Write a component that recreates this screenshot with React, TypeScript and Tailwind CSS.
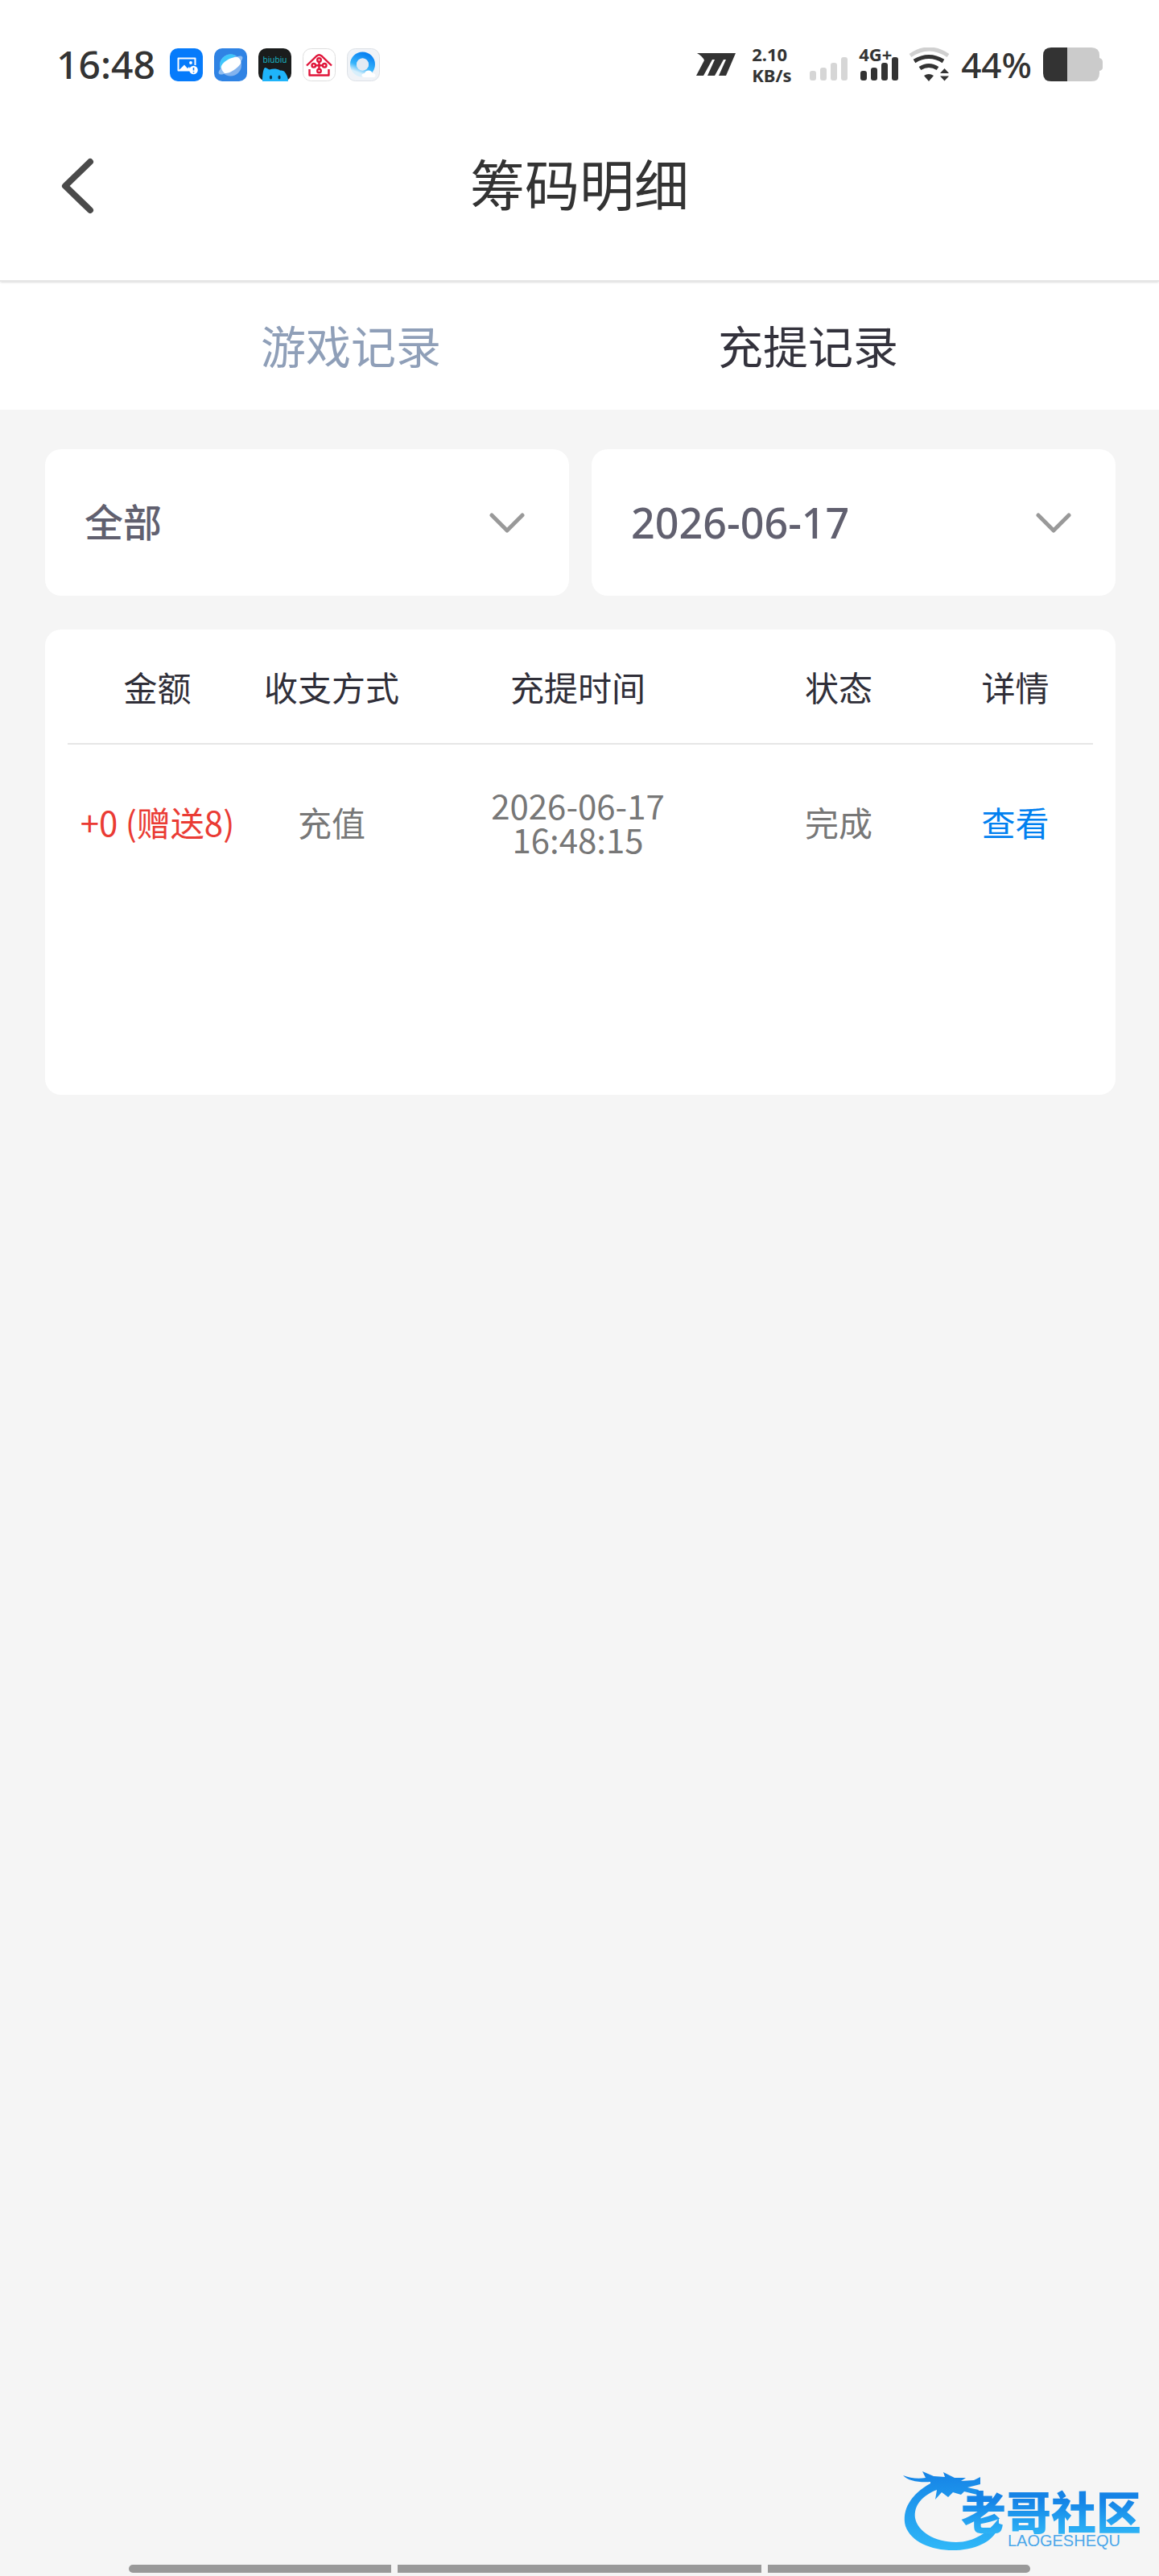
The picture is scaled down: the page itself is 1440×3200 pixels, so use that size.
import { useState } from "react"

const tabs = ["游戏记录", "充提记录"]

const types = ["全部", "充值", "提现"]
const dates = ["2026-06-17", "2026-06-16", "2026-06-15"]

const records = [
    { amount: "+0 (赠送8)", method: "充值", date: "2026-06-17", time: "16:48:15", status: "完成" },
]

function AppIcons() {
    return (
        <div className="flex items-center gap-3.5">
            {/* Gallery */}
            <svg viewBox="0 0 41 41" className="size-[41px]">
                <rect width="41" height="41" rx="10" fill="#067bfb" />
                <path d="M25 27.500H10.500V12.500H31.500V21" fill="none" stroke="#fff" strokeWidth="2" strokeLinejoin="round" />
                <path d="M11 27.500L18 20.500L22 25L24 23L26 27.500Z" fill="#fff" />
                <circle cx="26" cy="18" r="1.900" fill="#fff" />
                <circle cx="29.500" cy="27" r="5.300" fill="#fff" />
                <path d="M29.500 24V27.500M29.500 29.200V30.500" stroke="#067bfb" strokeWidth="1.600" />
            </svg>
            {/* Planet browser */}
            <svg viewBox="0 0 41 41" className="size-[41px]">
                <rect width="41" height="41" rx="10" fill="#2f83e4" />
                <circle cx="20.500" cy="21" r="13.500" fill="#83b3ee" />
                <path d="M7.500 24A13.500 13.500 0 0 1 27 9L8 25Z" fill="#3fc6fb" />
                <ellipse cx="20.500" cy="21" rx="18" ry="5.500" transform="rotate(-36 20.500 21)" fill="#8fbdf1" />
                <path d="M9 24.500C7 20 19 10 29 11C33 13 34 17 33 19C28 26 18 32 13 31C11 29 9.500 27 9 24.500Z" fill="#fff" />
            </svg>
            {/* biubiu */}
            <svg viewBox="0 0 41 41" className="size-[41px]">
                <rect width="41" height="41" rx="10" fill="#1a1c1c" />
                <text x="20.500" y="17.500" textAnchor="middle" fontSize="10" fontFamily="Noto Sans, sans-serif" fill="#18b7c4">biubiu</text>
                <path d="M5 41C5 35 5.500 27 8 24C10 24 12 26 14 26.500C18 25 23 25 27 27.500C29 27.500 31 28 32 28.500C35 32 37 36 37 41Z" fill="#1fb4fa" />
                <ellipse cx="15.500" cy="36" rx="1.600" ry="2.600" fill="#10324a" />
                <ellipse cx="26" cy="36" rx="1.600" ry="2.600" fill="#10324a" />
            </svg>
            {/* Red house */}
            <svg viewBox="0 0 41 41" className="size-[41px]">
                <rect x="0.500" y="0.500" width="40" height="40" rx="10" fill="#fff" stroke="#dedede" />
                <g fill="none" stroke="#e0153a" strokeWidth="2.400">
                    <path d="M5 21.500L17.500 9.500Q20.500 7 23.500 9.500L36 21.500" />
                    <path d="M8.500 26V33.500H32.500V26" strokeLinejoin="round" />
                    <circle cx="20.500" cy="14.500" r="2.300" />
                    <circle cx="20.500" cy="28" r="2.300" />
                    <circle cx="13.800" cy="21.300" r="2.300" />
                    <circle cx="27.200" cy="21.300" r="2.300" />
                    <path d="M20.500 17V25.500M16 21.300H25" />
                </g>
            </svg>
            {/* QQ browser */}
            <svg viewBox="0 0 41 41" className="size-[41px]">
                <defs>
                    <linearGradient id="ring" x1="0.800" y1="0" x2="0.400" y2="1">
                        <stop offset="0" stopColor="#0a83f2" />
                        <stop offset="0.650" stopColor="#36b4fb" />
                        <stop offset="1" stopColor="#d8effb" />
                    </linearGradient>
                </defs>
                <rect x="0.500" y="0.500" width="40" height="40" rx="10" fill="#f0f3f7" stroke="#dde1e6" />
                <circle cx="19.500" cy="20" r="11.500" fill="none" stroke="url(#ring)" strokeWidth="8" />
                <circle cx="19.500" cy="20" r="7.500" fill="#e3eaf3" />
                <path d="M21 36C17 35 18 31 22 31C24 26 31 27 31.500 31C36 30 37 36 33 36Z" fill="#fff" />
            </svg>
        </div>
    )
}

function SignalBars({ className }: { className: string }) {
    return (
        <svg viewBox="0 0 48 30" className={className} fill="currentColor">
            <rect x="0" y="17" width="8" height="12" rx="3" />
            <rect x="13" y="13" width="8" height="16" rx="3" />
            <rect x="26" y="7" width="8" height="22" rx="3" />
            <rect x="39" y="0" width="8" height="29" rx="3" />
        </svg>
    )
}

function StatusBar() {
    return (
        <div className="flex h-40 items-center justify-between px-[70px] text-[#333]">
            <div className="flex items-center gap-[18px]">
                <span className="text-5xl font-medium">16:48</span>
                <AppIcons />
            </div>
            <div className="flex items-center">
                <svg viewBox="0 0 49 28" className="mr-5 h-7 w-[49px]" fill="currentColor">
                    <path d="M1 0H49L37 28H28L37 8H34L23 28H14L23 8H20L9 28H0L10 9Q8 4 1 0Z" />
                </svg>
                <div className="flex w-[72px] flex-col text-[22px]/[26px] font-bold">
                    <span>2.10</span>
                    <span>KB/s</span>
                </div>
                <div className="flex h-[42px] flex-col justify-end">
                    <SignalBars className="h-[30px] w-12 text-[#d6d6d6]" />
                </div>
                <div className="relative ml-[15px] flex h-[42px] flex-col justify-end">
                    <span className="absolute -left-0.5 -top-1 text-[22px]/6 font-bold">4G+</span>
                    <SignalBars className="h-[30px] w-12" />
                </div>
                <svg viewBox="0 0 51 42" className="ml-3 h-[42px] w-[51px]">
                    <path d="M2 10Q25 -6 49 10" fill="none" stroke="#d0d0d0" strokeWidth="5" />
                    <path d="M7 17Q25 6 43 17" fill="none" stroke="#333" strokeWidth="5" />
                    <path d="M14 26Q25 19 36 26" fill="none" stroke="#333" strokeWidth="5" />
                    <path d="M19 35Q25 31 31 35L25 42Z" fill="#333" />
                    <path d="M39 32L44.500 26L50 32ZM39 35.500L44.500 41.500L50 35.500Z" fill="#333" />
                </svg>
                <span className="ml-3.5 text-[44px] font-medium">44%</span>
                <svg viewBox="0 0 74 42" className="ml-3.5 h-[42px] w-[74px]">
                    <path d="M10 0H60Q70 0 70 10V13Q74 14 74 18V25Q74 28 70 29V32Q70 42 60 42H10Z" fill="#cbcbcb" />
                    <path d="M30 0H10Q0 0 0 10V32Q0 42 10 42H30Z" fill="#333" />
                </svg>
            </div>
        </div>
    )
}

function Dropdown({ label, options, className }: { label: string; options: string[]; className: string }) {
    return (
        <div className="relative flex-1">
            <select
                aria-label={label}
                className={`h-[182px] w-full appearance-none rounded-[20px] bg-white pl-[49px] pr-28 font-medium text-[#61606f] outline-none ${className}`}
            >
                {options.map((option) => (
                    <option key={option}>{option}</option>
                ))}
            </select>
            <svg
                viewBox="0 0 44 26"
                className="pointer-events-none absolute right-[55px] top-1/2 h-[26px] w-11 -translate-y-1/2"
                fill="none"
                stroke="#999"
                strokeWidth="5"
                strokeLinecap="round"
                strokeLinejoin="round"
            >
                <path d="M3 4L22 23L41 4" />
            </svg>
        </div>
    )
}

function RecordTable() {
    return (
        <div className="mt-[42px] min-h-[578px] rounded-[20px] bg-white px-7">
            <table className="w-full table-fixed border-collapse text-center font-['Noto_Sans_CJK_SC',sans-serif] text-[42px]/[42px]">
                <colgroup>
                    <col className="w-[223px]" />
                    <col className="w-[210px]" />
                    <col className="w-[402px]" />
                    <col className="w-[246px]" />
                    <col className="w-[193px]" />
                </colgroup>
                <thead>
                    <tr className="h-[142px] border-b-2 border-[#e6e6e6] text-[#2f2e38]">
                        <th className="font-normal">金额</th>
                        <th className="font-normal">收支方式</th>
                        <th className="font-normal">充提时间</th>
                        <th className="font-normal">状态</th>
                        <th className="font-normal">详情</th>
                    </tr>
                </thead>
                <tbody>
                    {records.map((record) => (
                        <tr key={record.time} className="h-48 text-[#777]">
                            <td className="whitespace-nowrap text-[#ea3b34]">{record.amount}</td>
                            <td>{record.method}</td>
                            <td>
                                {record.date}
                                <br />
                                {record.time}
                            </td>
                            <td>{record.status}</td>
                            <td>
                                <a href="#detail" className="text-[#0080f0]">查看</a>
                            </td>
                        </tr>
                    ))}
                </tbody>
            </table>
        </div>
    )
}

function Watermark() {
    return (
        <div className="pointer-events-none absolute bottom-7 right-5 h-28 w-[300px]">
            <svg viewBox="0 0 300 112" className="absolute inset-0 size-full">
                <defs>
                    <linearGradient id="dragon" x1="0" y1="0" x2="0" y2="1">
                        <stop offset="0" stopColor="#1583e6" />
                        <stop offset="1" stopColor="#30b8f8" />
                    </linearGradient>
                </defs>
                <path
                    fill="url(#dragon)"
                    d="M36 25C12 38 0 58 5 78C12 98 38 109 68 108C96 107 116 95 121 78V68C108 86 90 98 68 98C40 98 20 84 17 68C15 52 26 40 44 33L42 45L50 36L58 42L64 36L74 39L78 35L94 39L96 33L82 30L98 26L98 17L90 21L74 22L80 18L66 18L52 11L54 17L40 16L26 10L30 18C20 20 10 18 2 15C8 22 22 24 36 23Z"
                />
            </svg>
            <div className="absolute right-0.5 top-7 bg-linear-to-b from-[#1583e6] from-30% to-[#2fb4f6] bg-clip-text font-['Noto_Sans_CJK_SC',sans-serif] text-[56px]/[60px] font-black text-transparent">
                老哥社区
            </div>
            <div className="absolute right-7 top-[86px] font-['Liberation_Sans',sans-serif] text-xl/5 text-[#4aa7ea]">LAOGESHEQU</div>
        </div>
    )
}

export default function App() {
    const [active, setActive] = useState(1)

    return (
        <div className="relative flex min-h-screen flex-col bg-[#f5f5f5] font-['Noto_Sans','Noto_Sans_CJK_SC',sans-serif]">
            <header className="relative border-b-2 border-[#e6e6e6] bg-white shadow-sm">
                <StatusBar />
                <div className="grid h-[188px] grid-cols-[1fr_auto_1fr] items-start px-[72px] pt-5 text-[#333]">
                    <button type="button" aria-label="返回" className="mt-4 justify-self-start">
                        <svg viewBox="0 0 48 72" className="h-[72px] w-12" fill="none" stroke="#4a4a4a" strokeWidth="8" strokeLinecap="round" strokeLinejoin="round">
                            <path d="M40 5L9 35L40 65" />
                        </svg>
                    </button>
                    <h1 className="text-[68px]/[100px]">筹码明细</h1>
                </div>
            </header>

            {/* Tabs */}
            <nav className="grid h-[159px] grid-cols-2 bg-white px-[152px]">
                {tabs.map((tab, index) => (
                    <button
                        key={tab}
                        type="button"
                        onClick={() => setActive(index)}
                        className={`text-[56px] ${active === index ? "text-[#33323c]" : "text-[#8f9fb8]"}`}
                    >
                        {tab}
                    </button>
                ))}
            </nav>

            <main className="flex-1 pl-14 pr-[54px] pt-[49px]">
                <div className="flex gap-7">
                    <Dropdown label="类型" options={types} className="text-5xl" />
                    <Dropdown label="日期" options={dates} className="text-[52px]" />
                </div>
                <RecordTable />
            </main>

            {/* System navigation bar */}
            <div className="grid grid-cols-[326fr_452fr_326fr] gap-2 px-40 pb-1">
                <div className="h-2.5 rounded-l-full bg-[#999]" />
                <div className="h-2.5 bg-[#999]" />
                <div className="h-2.5 rounded-r-full bg-[#999]" />
            </div>

            <Watermark />
        </div>
    )
}
